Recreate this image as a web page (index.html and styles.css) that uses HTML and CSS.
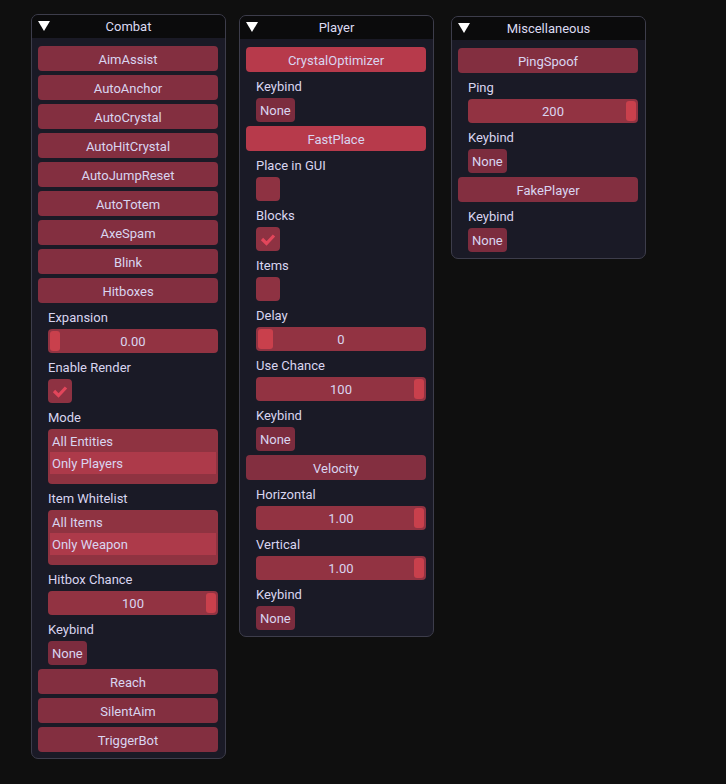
FILE: index.html
```html
<html>
    <head>
        <title>ClickGUI</title>
        <meta charset="UTF-8">
        <link rel="stylesheet" href="styles.css">
    </head>
    <body>
        <!-- Combat -->
        <div class="window combat">
            <div class="titulo"><span class="flecha"></span>Combat</div>
            <div class="cuerpo">
                <div class="modulo">AimAssist</div>
                <div class="modulo">AutoAnchor</div>
                <div class="modulo">AutoCrystal</div>
                <div class="modulo">AutoHitCrystal</div>
                <div class="modulo">AutoJumpReset</div>
                <div class="modulo">AutoTotem</div>
                <div class="modulo">AxeSpam</div>
                <div class="modulo">Blink</div>
                <div class="modulo">Hitboxes</div>
                <div class="ajustes">
                    <div class="etiqueta">Expansion</div>
                    <div class="slider"><span class="grab izq"></span>0.00</div>
                    <div class="etiqueta">Enable Render</div>
                    <div class="check"><svg width="24" height="24"><polyline points="6,12 10.5,16.5 18,8.5" fill="none" stroke="#e2465b" stroke-width="3.2"/></svg></div>
                    <div class="etiqueta">Mode</div>
                    <div class="lista">
                        <div class="item">All Entities</div>
                        <div class="item sel">Only Players</div>
                    </div>
                    <div class="etiqueta">Item Whitelist</div>
                    <div class="lista">
                        <div class="item">All Items</div>
                        <div class="item sel">Only Weapon</div>
                    </div>
                    <div class="etiqueta">Hitbox Chance</div>
                    <div class="slider"><span class="grab der"></span>100</div>
                    <div class="etiqueta">Keybind</div>
                    <div class="tecla">None</div>
                </div>
                <div class="modulo">Reach</div>
                <div class="modulo">SilentAim</div>
                <div class="modulo">TriggerBot</div>
            </div>
        </div>

        <!-- Player -->
        <div class="window player">
            <div class="titulo"><span class="flecha"></span>Player</div>
            <div class="cuerpo">
                <div class="modulo activo">CrystalOptimizer</div>
                <div class="ajustes">
                    <div class="etiqueta">Keybind</div>
                    <div class="tecla">None</div>
                </div>
                <div class="modulo activo">FastPlace</div>
                <div class="ajustes">
                    <div class="etiqueta">Place in GUI</div>
                    <div class="check"></div>
                    <div class="etiqueta">Blocks</div>
                    <div class="check"><svg width="24" height="24"><polyline points="6,12 10.5,16.5 18,8.5" fill="none" stroke="#e2465b" stroke-width="3.2"/></svg></div>
                    <div class="etiqueta">Items</div>
                    <div class="check"></div>
                    <div class="etiqueta">Delay</div>
                    <div class="slider"><span class="grab izq ancho"></span>0</div>
                    <div class="etiqueta">Use Chance</div>
                    <div class="slider"><span class="grab der"></span>100</div>
                    <div class="etiqueta">Keybind</div>
                    <div class="tecla">None</div>
                </div>
                <div class="modulo">Velocity</div>
                <div class="ajustes">
                    <div class="etiqueta">Horizontal</div>
                    <div class="slider"><span class="grab der"></span>1.00</div>
                    <div class="etiqueta">Vertical</div>
                    <div class="slider"><span class="grab der"></span>1.00</div>
                    <div class="etiqueta">Keybind</div>
                    <div class="tecla">None</div>
                </div>
            </div>
        </div>

        <!-- Miscellaneous -->
        <div class="window misc">
            <div class="titulo"><span class="flecha"></span>Miscellaneous</div>
            <div class="cuerpo">
                <div class="modulo">PingSpoof</div>
                <div class="ajustes">
                    <div class="etiqueta">Ping</div>
                    <div class="slider"><span class="grab der"></span>200</div>
                    <div class="etiqueta">Keybind</div>
                    <div class="tecla">None</div>
                </div>
                <div class="modulo">FakePlayer</div>
                <div class="ajustes">
                    <div class="etiqueta">Keybind</div>
                    <div class="tecla">None</div>
                </div>
            </div>
        </div>
    </body>
</html>
```
FILE: styles.css
```css
body{
    margin: 0px;
    background-color: #0f0f0f;
    font-family: Roboto, "Noto Sans", sans-serif;
    font-size: 13px;
    color: #d9d5f0;
}

/* ventanas sueltas sobre el fondo */
.window{
    position: absolute;
    width: 193px;
    background-color: #1a1a26;
    border: 1px solid #3d3d4b;
    border-radius: 7px;
    overflow: hidden;
}

.combat{
    left: 31px;
    top: 14px;
}

.player{
    left: 239px;
    top: 15px;
}

.misc{
    left: 451px;
    top: 16px;
}

.titulo{
    position: relative;
    height: 23px;
    line-height: 24px;
    background-color: #0b0b0c;
    text-align: center;
    color: #dcdaf2;
}

.flecha{
    position: absolute;
    left: 6px;
    top: 6px;
    width: 0px;
    height: 0px;
    border-left: 6px solid transparent;
    border-right: 6px solid transparent;
    border-top: 10px solid #ffffff;
}

.cuerpo{
    display: flex;
    flex-direction: column;
    gap: 4px;
    padding: 8px 7px 6px 6px;
}

.modulo{
    height: 25px;
    line-height: 27px;
    text-align: center;
    background-color: #832f40;
    border-radius: 4px;
}

.activo{
    background-color: #b73a4b;
}

.ajustes{
    display: flex;
    flex-direction: column;
    gap: 4px;
    padding-left: 10px;
}

.etiqueta{
    height: 18px;
    line-height: 22px;
}

.slider{
    position: relative;
    height: 24px;
    line-height: 26px;
    text-align: center;
    background-color: #923342;
    border-radius: 4px;
}

.grab{
    position: absolute;
    top: 2px;
    width: 10px;
    height: 20px;
    background-color: #c9404c;
    border-radius: 3px;
}

.izq{
    left: 2px;
}

.der{
    right: 2px;
}

.ancho{
    width: 15px;
}

.check{
    width: 24px;
    height: 24px;
    background-color: #8e3242;
    border-radius: 4px;
}

.check svg{
    display: block;
}

.lista{
    height: 55px;
    background-color: #8f3341;
    border-radius: 4px;
    padding: 1px 2px;
    box-sizing: border-box;
}

.item{
    height: 22px;
    line-height: 24px;
    padding-left: 2px;
}

.sel{
    background-color: #ad3a4a;
}

.tecla{
    align-self: flex-start;
    height: 24px;
    line-height: 26px;
    padding: 0px 4px;
    background-color: #7c2c3e;
    border-radius: 4px;
}
```
